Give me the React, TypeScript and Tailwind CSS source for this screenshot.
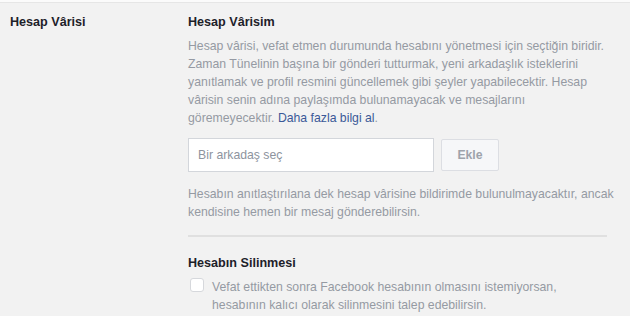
const App = () => {
  return (
    <div className="w-[630px] h-[316px] overflow-hidden bg-[#f2f2f2] border-t-2 border-[#fbfbfb] font-['Liberation_Sans',Arial,sans-serif] text-[12.25px]">
      <div className="border-t border-[#e6e6e6] flex pt-[10px]">
        <div className="w-[188px] pl-[10px] font-bold text-[12.6px] text-[#1d2129] leading-[18px]">
          Hesap Vârisi
        </div>
        <div className="w-[420px]">
          <h2 className="font-bold text-[12.6px] text-[#1d2129] leading-[18px]">Hesap Vârisim</h2>
          <p className="mt-[6px] text-[#959aa3] leading-[18px] w-[425px]">
            Hesap vârisi, vefat etmen durumunda hesabını yönetmesi için seçtiğin biridir.
            <br />
            Zaman Tünelinin başına bir gönderi tutturmak, yeni arkadaşlık isteklerini
            <br />
            yanıtlamak ve profil resmini güncellemek gibi şeyler yapabilecektir. Hesap
            <br />
            vârisin senin adına paylaşımda bulunamayacak ve mesajlarını
            <br />
            göremeyecektir. <a className="text-[#3b5998]">Daha fazla bilgi al</a>.
          </p>

          <div className="flex items-center gap-[7px] mt-[11px]">
            <input
              type="text"
              placeholder="Bir arkadaş seç"
              className="w-[246px] h-[34px] px-[9px] bg-white border border-[#d3d6db] text-[12.25px] placeholder:text-[#8d949e] focus:outline-none"
            />
            <button className="w-[58px] h-[32px] bg-[#f6f7f9] border border-[#dcdee3] rounded-[2px] font-bold text-[#9ea3ab] text-[12.25px]">
              Ekle
            </button>
          </div>

          <p className="mt-[13px] text-[#959aa3] leading-[18px] w-[430px]">
            Hesabın anıtlaştırılana dek hesap vârisine bildirimde bulunulmayacaktır, ancak
            <br />
            kendisine hemen bir mesaj gönderebilirsin.
          </p>

          <div className="mt-[14px] h-[2px] bg-[#e0e0e0] w-[419px]" />

          <h3 className="mt-[17px] font-bold text-[12.6px] text-[#1d2129] leading-[18px]">
            Hesabın Silinmesi
          </h3>
          <label className="flex items-start gap-[8px] mt-[6px] text-[#959aa3] leading-[18px]">
            <span className="mt-[0px] ml-[2px] w-[14px] h-[14px] shrink-0 rounded-[3px] border border-[#d6d8dc] bg-white" />
            <span>
              Vefat ettikten sonra Facebook hesabının olmasını istemiyorsan,
              <br />
              hesabının kalıcı olarak silinmesini talep edebilirsin.
            </span>
          </label>
        </div>
      </div>
    </div>
  );
};

export default App;
